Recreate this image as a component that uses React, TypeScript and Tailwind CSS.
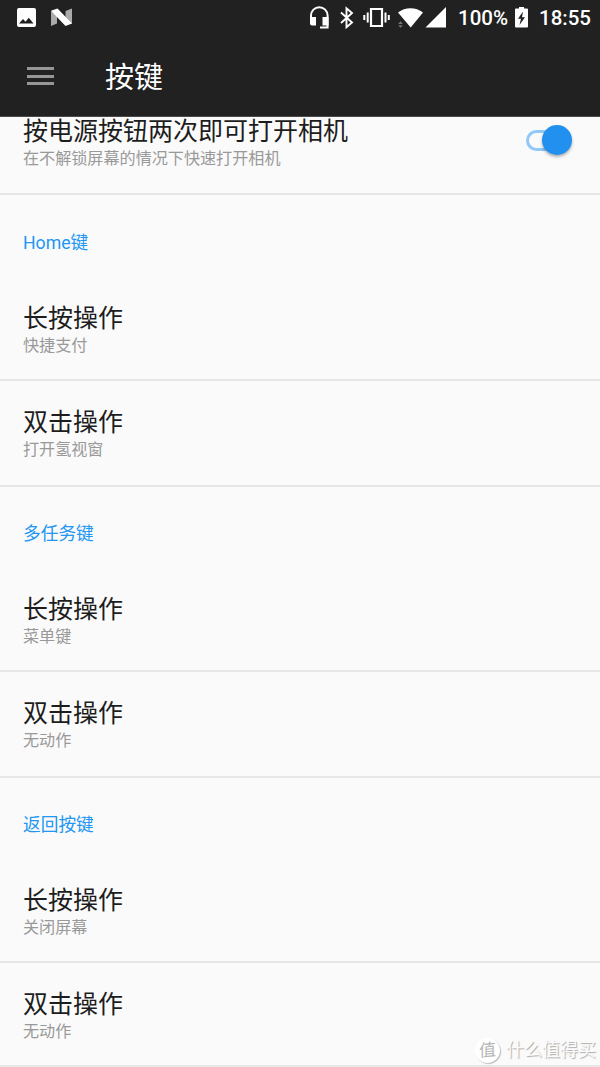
import clsx from "clsx"

interface KeyAction {
  title: string
  summary: string
}

interface KeyGroup {
  name: string
  actions: KeyAction[]
}

const groups: KeyGroup[] = [
  {
    name: "Home键",
    actions: [
      { title: "长按操作", summary: "快捷支付" },
      { title: "双击操作", summary: "打开氢视窗" },
    ],
  },
  {
    name: "多任务键",
    actions: [
      { title: "长按操作", summary: "菜单键" },
      { title: "双击操作", summary: "无动作" },
    ],
  },
  {
    name: "返回按键",
    actions: [
      { title: "长按操作", summary: "关闭屏幕" },
      { title: "双击操作", summary: "无动作" },
    ],
  },
]

function StatusBar() {
  return (
    <div className="h-9 flex items-center justify-between text-white">
      {/* Notifications */}
      <svg className="w-[90px] h-9" viewBox="0 0 90 36">
        <path fill="#fff" fillRule="evenodd" d="M19 8h15a2 2 0 0 1 2 2v15a2 2 0 0 1-2 2H19a2 2 0 0 1-2-2V10a2 2 0 0 1 2-2zM19 23.5h14.500l-4.700-5.800-3.300 4.100-2.500-2.800z" />
        <path fill="#aaa" d="M51 11l6 4v8.500L51 26zM65.500 11l6.500-2.500V24l-6.500-4z" />
        <path fill="#fff" d="M51 10.800L57.500 8.500 72 23.500 65.500 26z" />
      </svg>

      {/* System icons, battery and clock */}
      <div className="flex items-center">
        <svg className="w-[150px] h-9" viewBox="300 0 150 36">
          <path fill="none" stroke="#fff" strokeWidth="2" d="M311 20v-4.500a8.300 8.300 0 0 1 16.600 0V27.500H320" />
          <path fill="#fff" d="M310 17h6v8.500h-4a2 2 0 0 1-2-2zM322.500 17h6v8.500h-6z" />
          <path fill="none" stroke="#fff" strokeWidth="1.900" d="M341 12.500l11 10-5.500 4.700V8.300l5.500 4.700-11 10" />
          <path fill="none" stroke="#fff" strokeWidth="2.200" d="M371 9h11v17h-11z" />
          <path fill="none" stroke="#fff" strokeWidth="2" d="M367.700 12.500v10M364.300 15v5M385.500 12.500v10M388.800 15v5" />
          <path fill="#fff" d="M398 12.500C405 6.700 416 6.700 423 12.500L410.700 27.500z" />
          <path fill="#777" d="M398.200 24l2.300-2.700 2.300 2.700zM398.200 25.200l2.300 2.600 2.300-2.600z" />
          <path fill="#fff" d="M446 7v20.500h-20.500z" />
        </svg>
        <span className="w-[65px] pl-2 text-[20.500px] leading-9 font-medium whitespace-nowrap">100%</span>
        <svg className="w-[13px] h-9" viewBox="0 0 13 36">
          <path fill="#fff" d="M0 9.500a1 1 0 0 1 1-1h3V7h5v1.500h3a1 1 0 0 1 1 1V26.500a1 1 0 0 1-1 1H1a1 1 0 0 1-1-1z" />
          <path fill="#212121" d="M8 11.500L3 18.800h3L4.500 25l5.500-7.700H7z" />
        </svg>
        <span className="w-[72px] pl-[11px] text-[20.500px] leading-9 font-medium whitespace-nowrap">18:55</span>
      </div>
    </div>
  )
}

function ToggleSwitch() {
  return (
    <button className="relative w-[46px] h-[30px] shrink-0">
      <span className="absolute left-0 top-[5px] w-10 h-[21px] rounded-full border-[3px] border-[#90c9f8]" />
      <span className="absolute right-0 top-0 size-[30px] rounded-full bg-[#2190ee] shadow-[0_2px_3px_rgba(0,0,0,0.3)]" />
    </button>
  )
}

function PreferenceText({ title, summary }: KeyAction) {
  return (
    <div>
      <div className="text-[25px] leading-[30px] text-[#1d1d1d]">{title}</div>
      <div className="text-[16.100px] leading-6 text-[#999]">{summary}</div>
    </div>
  )
}

export default function App() {
  return (
    <div className="relative w-[600px] h-[1067px] overflow-hidden bg-[#fafafa] font-[Roboto,'Noto_Sans_CJK_SC',sans-serif]">
      <header className="h-[117px] bg-[#212121] border-b border-[#4a4a4a]">
        <StatusBar />
        <div className="h-20 flex items-center">
          <div className="ml-[27px] w-[27px] flex flex-col gap-[4.500px]">
            <span className="h-[3px] bg-[#969696]" />
            <span className="h-[3px] bg-[#969696]" />
            <span className="h-[3px] bg-[#969696]" />
          </div>
          <h1 className="ml-[51px] pt-1 text-[29px] leading-10 text-white">按键</h1>
        </div>
      </header>

      <div className="h-[78px] pl-[23px] pr-7 flex justify-between border-b-2 border-[#e6e6e6]">
        <PreferenceText title="按电源按钮两次即可打开相机" summary="在不解锁屏幕的情况下快速打开相机" />
        <div className="pt-2">
          <ToggleSwitch />
        </div>
      </div>

      {groups.map((group, g) => (
        <section key={group.name}>
          <h2
            className={clsx(
              "pl-[23px] text-[17.700px] leading-6 text-[#2196f3]",
              g === 0 ? "h-[81px] pt-9" : "h-20 pt-[35px]"
            )}
          >
            {group.name}
          </h2>
          {group.actions.map((action, i) => (
            <div
              key={action.title}
              className={clsx(
                "pl-[23px] border-b-2 border-[#e6e6e6]",
                i === 0 ? "h-[105px] pt-7" : "pt-[27px]",
                i === 1 && (g === 2 ? "h-[104px]" : "h-[106px]")
              )}
            >
              <PreferenceText {...action} />
            </div>
          ))}
        </section>
      ))}

      {/* Watermark */}
      <div className="absolute left-[475px] top-[1037px] flex items-center text-[#fcfcfc]">
        <span className="size-[25px] rounded-full bg-white text-center text-[17px] leading-[24px] text-[#b5b5b5] shadow-[1px_1px_1px_#bbb]">
          <span className="inline-block -skew-x-6 -rotate-6">值</span>
        </span>
        <span className="ml-[6px] text-[18px] leading-[26px] whitespace-nowrap [text-shadow:1px_1px_1px_#aaa]">什么值得买</span>
      </div>
    </div>
  )
}
